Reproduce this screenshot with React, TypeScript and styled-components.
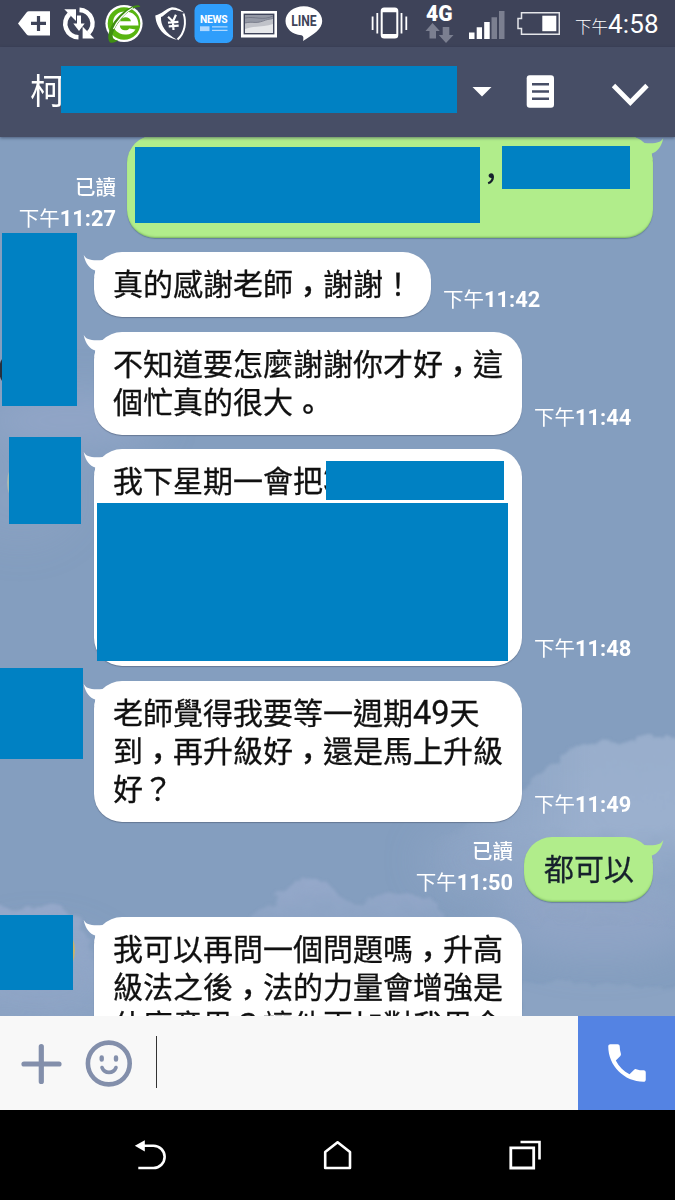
import React from "react";
import styled, { createGlobalStyle, css } from "styled-components";

const MASK = "#0081c3";
const CJK = `"Noto Sans CJK TC", sans-serif`;

const GlobalStyle = createGlobalStyle`
  body { margin: 0; background: #000; }
  * { box-sizing: border-box; }
`;

const Phone = styled.div`
  width: 675px;
  height: 1200px;
  display: flex;
  flex-direction: column;
  overflow: hidden;
  font-family: Roboto, ${CJK};
`;

const StatusBar = styled.div`
  height: 47px;
  flex: none;
  display: flex;
  background: #3e4359;
  color: #fff;
`;

const Glyph = styled.svg<{ $gap?: number }>`
  display: block;
  flex: none;
  margin-left: ${(p) => p.$gap ?? 0}px;
`;

const Clock = styled.div`
  margin-left: 15px;
  display: flex;
  align-items: baseline;
  font-size: 26px;
  line-height: 48px;
  letter-spacing: 0.2px;
  white-space: nowrap;
`;

const ClockPeriod = styled.span`
  font-family: ${CJK};
  font-weight: 300;
  font-size: 16.5px;
  letter-spacing: 0;
`;

const Header = styled.header`
  position: relative;
  z-index: 2;
  height: 90px;
  flex: none;
  display: flex;
  padding-left: 30px;
  background: #474e66;
  box-shadow: 0 1px 3px rgba(30, 40, 70, 0.55);
`;

const Title = styled.div`
  width: 31px;
  font: 400 35px/84px ${CJK};
  color: #fff;
  white-space: nowrap;
`;

const TitleMask = styled.div`
  position: relative;
  width: 396px;
  height: 47px;
  margin-top: 19px;
  background: ${MASK};
`;

const Chat = styled.main`
  position: relative;
  height: 879px;
  flex: none;
  overflow: hidden;
  background: #849ebf;
`;

const Sky = styled.svg`
  position: absolute;
  inset: 0;
`;

const Messages = styled.div`
  position: relative;
  display: flex;
  flex-direction: column;
  margin-top: -2px;
`;

const Row = styled.div<{ $mine?: boolean; $top?: number }>`
  position: relative;
  display: flex;
  align-items: flex-end;
  flex: none;
  margin-top: ${(p) => p.$top ?? 15}px;
  ${(p) =>
    p.$mine
      ? css`
          justify-content: flex-end;
          padding-right: 22px;
          gap: 11px;
        `
      : css`
          padding-left: 94px;
          gap: 12px;
        `}
`;

const Bubble = styled.div<{ $mine?: boolean; $w: number; $h?: number }>`
  position: relative;
  flex: none;
  width: ${(p) => p.$w}px;
  height: ${(p) => (p.$h ? `${p.$h}px` : "auto")};
  padding: 13px 18px 14px ${(p) => (p.$mine ? 20 : 19)}px;
  border-radius: 28px;
  background: ${(p) => (p.$mine ? "#b1ed8b" : "#fff")};
  color: ${(p) => (p.$mine ? "#16202c" : "#111")};
  box-shadow: ${(p) =>
    p.$mine
      ? "inset 0 -2px 2px -1px rgba(80,140,60,.55), 0 1px 1px rgba(60,90,110,.45)"
      : "0 1px 1px rgba(80,95,120,.6)"};
`;

const LineBox = styled.div`
  height: 38px;
  font: 400 30px/34px ${CJK};
  -webkit-text-stroke: 0.3px currentColor;
  white-space: nowrap;
`;

const LowMark = styled.span`
  font-weight: 500;
  line-height: 0;
  vertical-align: -7px;
`;

const Digits = styled.span`
  font-family: Roboto, sans-serif;
  font-size: 32.5px;
  line-height: 1;
`;

const Tail = styled.svg<{ $mine?: boolean }>`
  position: absolute;
  top: 0;
  ${(p) => (p.$mine ? "right: -12px; transform: scaleX(-1);" : "left: -12px;")}
`;

const Meta = styled.div<{ $raised?: boolean }>`
  margin-top: -4px;
  padding-bottom: ${(p) => (p.$raised ? 5 : 3)}px;
  display: flex;
  flex-direction: column;
  align-items: flex-end;
  color: #fff;
`;

const MetaLine = styled.div`
  height: 31px;
  line-height: 31px;
  display: flex;
  align-items: baseline;
  font-size: 21.8px;
  font-weight: 700;
  white-space: nowrap;
`;

const MetaCjk = styled.span<{ $strong?: boolean }>`
  font-family: ${CJK};
  font-weight: ${(p) => (p.$strong ? 500 : 400)};
  font-size: 20.5px;
`;

const Avatar = styled.div<{ $x: number; $y: number; $d: number; $c: string }>`
  position: absolute;
  left: ${(p) => p.$x}px;
  top: ${(p) => p.$y}px;
  width: ${(p) => p.$d}px;
  height: ${(p) => p.$d}px;
  border-radius: 50%;
  background: ${(p) => p.$c};
`;

const Mask = styled.div<{ $x: number; $y: number; $w: number; $h: number }>`
  position: absolute;
  z-index: 1;
  left: ${(p) => p.$x}px;
  top: ${(p) => p.$y}px;
  width: ${(p) => p.$w}px;
  height: ${(p) => p.$h}px;
  background: ${MASK};
`;

const MaskedLine = styled.div`
  display: flex;
  align-items: flex-start;
  margin: -13px 0 0 -12px;
`;

const InlineMask = styled.div<{ $w: number; $h: number; $top: number }>`
  flex: none;
  width: ${(p) => p.$w}px;
  height: ${(p) => p.$h}px;
  margin-top: ${(p) => p.$top}px;
  background: ${MASK};
`;

const Comma = styled.span`
  width: 22px;
  margin-top: 23px;
  display: flex;
  justify-content: center;
  font: 500 30px/36px ${CJK};
`;

const Composer = styled.div`
  height: 94px;
  flex: none;
  display: flex;
  background: #f8f8f8;
`;

const Caret = styled.div`
  width: 1px;
  height: 52px;
  margin: 20px 0 0 22px;
  background: #333;
`;

const CallButton = styled.div`
  width: 97px;
  margin-left: auto;
  display: flex;
  align-items: center;
  justify-content: center;
  background: #5483e3;
`;

const NavBar = styled.nav`
  height: 90px;
  flex: none;
  display: flex;
  background: #000;
`;

/* Every icon keeps bar-wide x coordinates, windowed to its own slot. */
const Icon = ({ x, w, y = 0, h = 47, gap, children }: {
  x: number; w: number; y?: number; h?: number; gap?: number; children: React.ReactNode;
}) => (
  <Glyph width={w} height={h} viewBox={`${x} ${y} ${w} ${h}`} $gap={gap} fill="none">
    {children}
  </Glyph>
);

const BubbleTail = ({ mine }: { mine?: boolean }) => (
  <Tail $mine={mine} width="24" height="30" viewBox="0 0 24 30">
    <path d="M1.700 3C4.500 8 9 8.600 21 8V25H12.500L13.200 18.500C8 17 3.500 12 1.700 3Z" fill={mine ? "#b1ed8b" : "#fff"} />
  </Tail>
);

/* Commas and full stops sit close to the baseline of the line. */
const Line = ({ text, children }: { text: string; children?: React.ReactNode }) => (
  <LineBox>
    {text.split(/([，。])/).map((part, i) =>
      part === "，" || part === "。" ? <LowMark key={i}>{part}</LowMark> : part
    )}
    {children}
  </LineBox>
);

const Time = ({ at, read }: { at: string; read?: boolean }) => (
  <Meta $raised={read}>
    {read && <MetaLine><MetaCjk $strong>已讀</MetaCjk></MetaLine>}
    <MetaLine><MetaCjk>下午</MetaCjk>{at}</MetaLine>
  </Meta>
);

const StatusIcons = () => (
  <>
    <Icon x={17} w={34} gap={17}>
      <path d="M18 23.5 26.5 12.6Q27.5 11.3 29 11.3H50V35.5H29Q27.5 35.5 26.5 34.3Z" fill="#fff" />
      <path d="M31 23.4H46M38.5 16V31" stroke="#3e4359" strokeWidth="3.2" />
    </Icon>
    <Icon x={61} w={36} gap={10}>
      <path d="M78.500 37.300A13.500 13.500 0 0 1 69.500 14" stroke="#fff" strokeWidth="4.600" />
      <path d="M64.300 9.300H76V21Z" fill="#fff" />
      <path d="M79.500 9.900A13.500 13.500 0 0 1 88.500 33" stroke="#fff" strokeWidth="4.600" />
      <path d="M82.600 26.500V38.500H94.300Z" fill="#fff" />
      <path d="M79 15.500V25" stroke="#fff" strokeWidth="4" />
      <path d="M73.300 23.500H84.700L79 31Z" fill="#fff" />
    </Icon>
    <Icon x={104} w={40} gap={7}>
      <circle cx="124" cy="23.500" r="18.600" fill="#fff" />
      <circle cx="124" cy="23.500" r="16.300" fill="#58b510" />
      <path d="M135.500 30.500C133 34.500 129 36 125 35.500C117.500 35 113 30.500 113 24C113 17 118 12.500 125 12.500C133 12.500 138.500 17.500 138.500 26.500H119.800C120 29.500 122 31.300 125 31.300C127 31.300 128.500 30.800 129.300 29.500Z" fill="#fff" transform="translate(0 -1)" />
      <path d="M120 21.300H131C130 16 121.500 16 120 21.300Z" fill="#58b510" />
      <path d="M140.300 7C139 2.500 127 7 117 18C108 28 106.500 39 110 42.500C113 43.500 116 42 118.500 40C113.500 41 110.500 37 114.500 29.500C119 20 131 6 140.300 7Z" fill="#3f8e12" />
      <path d="M133 7.800C125 12 117 21 113.500 29" stroke="#fff" strokeWidth="1.200" />
    </Icon>
    <Icon x={154} w={33} gap={10}>
      <path d="M155.300 15.500C162 14 165 9 172 7.200C178 7.500 181 10 184 12.500C180 11 176 9.500 172 9.700C167 11.500 165 15.500 161 17C160.500 25 165 33 177 39.800C161 36 156 25 155.300 15.500Z" fill="#fff" />
      <path d="M183.500 13.500C186.500 22 185 33 177.500 39.500" stroke="#fff" strokeWidth="2" />
      <path d="M168.500 16.500 173 21.500 176.500 15M173 21.500V30M168 22.300H178.500M168.500 26H178.500" stroke="#fff" strokeWidth="2.200" transform="rotate(-4 173 23)" />
    </Icon>
    <Icon x={194} w={39} gap={7}>
      <rect x="194.500" y="4" width="38.500" height="39" rx="6.500" fill="#2f9efb" />
      <text x="213.800" y="23.400" textAnchor="middle" fontFamily="Roboto, sans-serif" fontWeight="700" fontSize="10.300" textLength="27.500" fill="#fff">NEWS</text>
      <rect x="200" y="26.300" width="9.500" height="4.800" fill="#aed8ff" />
      <path d="M212 26.800H227.500M212 30.300H227.500" stroke="#aed8ff" strokeWidth="1.200" />
    </Icon>
    <Icon x={240} w={38} gap={7}>
      <rect x="242" y="12" width="34" height="24.500" fill="#fff" stroke="#fff" strokeWidth="2" />
      <rect x="244.300" y="14.300" width="29.400" height="19.400" fill="#9498a5" stroke="#3e4359" strokeWidth="1.400" />
      <path d="M245 23C252 21 255 24 262 21S270 20 273 18V33H245Z" fill="#c0c2c9" />
      <path d="M245 29C254 26 265 27 273 24V33H245Z" fill="#e6e7ea" />
      <path d="M245 18C255 16 263 21 273 16M245 23C253 21 255 24 263 21S270 20 273 18" stroke="#6c7080" strokeWidth=".8" />
    </Icon>
    <Icon x={285} w={38} gap={7}>
      <path d="M303.800 6.300C314 6.300 322.200 12.700 322.200 21C322.200 29 314 34 303 41C303.700 38 303.700 36 301.500 35.200C292 34.500 285.500 28.500 285.500 21C285.500 12.700 293.500 6.300 303.800 6.300Z" fill="#fff" />
      <text x="303.900" y="25.800" textAnchor="middle" fontFamily="Roboto, sans-serif" fontWeight="700" fontSize="14" textLength="25.500" lengthAdjust="spacingAndGlyphs" fill="#3e4359">LINE</text>
    </Icon>
    <Icon x={370} w={39} gap={47}>
      <rect x="381.700" y="8.600" width="15.600" height="29" rx="2.500" stroke="#fff" strokeWidth="2" />
      <path d="M382 10.500H397M382 35.800H397" stroke="#fff" strokeWidth="3.400" />
      <path d="M377.300 13V33.500M372.600 16.500V30M401.500 13V33.500M406.300 16.500V30" stroke="#fff" strokeWidth="1.800" />
    </Icon>
    <Icon x={424} w={30} gap={15}>
      <text x="426" y="20.800" fontFamily="Roboto, sans-serif" fontWeight="900" fontSize="22.300" textLength="26.500" lengthAdjust="spacingAndGlyphs" fill="#fff">4G</text>
      <path d="M432.500 23 439.800 31H436V38.500H429.500V31H425.500Z" fill="#7b7f90" />
      <path d="M446 43 438.800 35H442.700V27H449.300V35H453.500Z" fill="#7b7f90" />
    </Icon>
    <Icon x={468} w={37} gap={14}>
      <path d="M469 32.500H474.500V39H469ZM476.700 27.300H482V39H476.700ZM484.200 22H489.700V39H484.200Z" fill="#fff" />
      <path d="M491.500 17.300H497V39H491.500ZM499 11H504.500V39H499Z" fill="#7b7f90" />
    </Icon>
    <Icon x={516} w={44} gap={11}>
      <path d="M521.500 12.700H559.300V34.300H521.500V28.500H518V18.500H521.500Z" stroke="#e4e5e9" strokeWidth="1.500" />
      <rect x="542.300" y="15.700" width="14" height="15.500" fill="#fff" />
    </Icon>
  </>
);

const Clouds = () => (
  <Sky width="675" height="879" viewBox="0 137 675 879">
    <defs>
      <filter id="cloud" x="-20%" y="-20%" width="140%" height="140%">
        <feTurbulence type="fractalNoise" baseFrequency=".045" numOctaves="4" seed="4" />
        <feDisplacementMap in="SourceGraphic" scale="22" xChannelSelector="R" yChannelSelector="G" />
        <feGaussianBlur stdDeviation="1.6" />
      </filter>
      <filter id="haze" x="-40%" y="-40%" width="180%" height="180%">
        <feGaussianBlur stdDeviation="18" />
      </filter>
      <linearGradient id="fade" x1="0" y1="0" x2="0" y2="1">
        <stop offset="0" stopColor="#9cb0ce" stopOpacity=".85" />
        <stop offset=".4" stopColor="#9fb3d0" stopOpacity=".85" />
        <stop offset=".85" stopColor="#94a9c9" stopOpacity="0" />
      </linearGradient>
      <linearGradient id="wisp" x1="0" y1="0" x2="0" y2="1">
        <stop offset="0" stopColor="#9bacce" stopOpacity=".75" />
        <stop offset="1" stopColor="#94a9c9" stopOpacity=".1" />
      </linearGradient>
      <linearGradient id="edge" x1="430" y1="0" x2="590" y2="0" gradientUnits="userSpaceOnUse">
        <stop offset="0" stopColor="#000" />
        <stop offset="1" stopColor="#fff" />
      </linearGradient>
      <mask id="soften" maskUnits="userSpaceOnUse" x="400" y="700" width="300" height="300">
        <rect x="400" y="700" width="300" height="300" fill="url(#edge)" />
      </mask>
    </defs>
    <g filter="url(#haze)" fill="#9bacce">
      <ellipse cx="70" cy="420" rx="90" ry="30" opacity=".55" />
      <ellipse cx="20" cy="500" rx="60" ry="45" opacity=".2" />
      <ellipse cx="40" cy="980" rx="80" ry="50" opacity=".35" />
      <ellipse cx="500" cy="860" rx="80" ry="40" opacity=".35" />
      <ellipse cx="600" cy="920" rx="100" ry="40" opacity=".5" />
    </g>
    <g mask="url(#soften)">
      <g filter="url(#cloud)">
        <path d="M430 850C455 820 515 810 528 785C540 765 560 755 575 750C590 757 610 737 640 735C660 734 680 742 710 742V960H430Z" fill="url(#fade)" />
      </g>
    </g>
    <g filter="url(#cloud)">
      <path d="M250 922C262 905 290 880 315 880C335 885 345 905 365 905C385 890 420 890 440 905L450 960H240Z" fill="url(#wisp)" />
      <path d="M-20 910C5 900 20 915 40 907C55 895 60 915 80 920L110 1030H-20Z" fill="url(#wisp)" />
      <path d="M520 985C570 970 620 1000 700 985V1040H520Z" fill="#9dafce" opacity=".3" />
    </g>
  </Sky>
);

export default function App() {
  return (
    <>
      <GlobalStyle />
      <Phone>
        <StatusBar>
          <StatusIcons />
          <Clock><ClockPeriod>下午</ClockPeriod>4:58</Clock>
        </StatusBar>

        <Header>
          <Title>柯</Title>
          <TitleMask />
          <Icon x={472} w={20} h={90} y={47} gap={15}>
            <path d="M472.500 87H491.500L482 96.500Z" fill="#fff" />
          </Icon>
          <Icon x={526} w={29} h={90} y={47} gap={34}>
            <rect x="526.700" y="75.300" width="27.300" height="32.500" rx="3" fill="#fff" />
            <path d="M532 84.300H549M532 91.500H549M532 98.700H549" stroke="#474e66" strokeWidth="2.600" />
          </Icon>
          <Icon x={610} w={40} h={90} y={47} gap={55}>
            <path d="M613.500 85.500 630.300 102.500 647 85.500" stroke="#fff" strokeWidth="4.800" />
          </Icon>
        </Header>

        <Chat>
          <Clouds />
          <Messages>
            <Row $mine $top={0}>
              <Time at="11:27" read />
              <Bubble $mine $w={526} $h={103}>
                <MaskedLine>
                  <InlineMask $w={345} $h={76} $top={12} />
                  <Comma>，</Comma>
                  <InlineMask $w={128} $h={43} $top={11} />
                </MaskedLine>
                <BubbleTail mine />
              </Bubble>
            </Row>

            <Row $top={14}>
              <Mask $x={2} $y={-19} $w={75} $h={173} />
              <Bubble $w={337}>
                <BubbleTail />
                <Line text="真的感謝老師，謝謝！" />
              </Bubble>
              <Time at="11:42" />
            </Row>

            <Row>
              <Avatar $x={-1} $y={16} $d={44} $c="#26303e" />
              <Mask $x={2} $y={-19} $w={75} $h={93} />
              <Bubble $w={428}>
                <BubbleTail />
                <Line text="不知道要怎麼謝謝你才好，這" />
                <Line text="個忙真的很大。" />
              </Bubble>
              <Time at="11:44" />
            </Row>

            <Row $top={14}>
              <Avatar $x={7} $y={0} $d={67} $c="#a9b9b4" />
              <Mask $x={9} $y={-12} $w={72} $h={87} />
              <Bubble $w={428} $h={217}>
                <BubbleTail />
                <Line text="我下星期一會把"><Digits>3</Digits></Line>
                <Mask $x={232} $y={12} $w={178} $h={39} />
                <Mask $x={3} $y={54} $w={411} $h={158} />
              </Bubble>
              <Time at="11:48" />
            </Row>

            <Row>
              <Mask $x={0} $y={-13} $w={83} $h={91} />
              <Bubble $w={428}>
                <BubbleTail />
                <Line text="老師覺得我要等一週期"><Digits>49</Digits>天</Line>
                <Line text="到，再升級好，還是馬上升級" />
                <Line text="好？" />
              </Bubble>
              <Time at="11:49" />
            </Row>

            <Row $mine>
              <Time at="11:50" read />
              <Bubble $mine $w={129}>
                <BubbleTail mine />
                <Line text="都可以" />
              </Bubble>
            </Row>

            <Row>
              <Avatar $x={8} $y={0} $d={67} $c="#c9b36b" />
              <Mask $x={0} $y={-2} $w={73} $h={75} />
              <Bubble $w={428}>
                <BubbleTail />
                <Line text="我可以再問一個問題嗎，升高" />
                <Line text="級法之後，法的力量會增強是" />
                <Line text="什麼意思？讓他更加對我思念" />
              </Bubble>
            </Row>
          </Messages>
        </Chat>

        <Composer>
          <Icon x={20} w={43} y={1016} h={94} gap={20}>
            <path d="M24 1064H59M41.300 1046.500V1081.500" stroke="#838fab" strokeWidth="5.200" strokeLinecap="round" />
          </Icon>
          <Icon x={84} w={50} y={1016} h={94} gap={21}>
            <circle cx="108.800" cy="1063.500" r="20.900" stroke="#838fab" strokeWidth="4.600" />
            <path d="M101.700 1057.500V1059.500M116 1057.500V1059.500" stroke="#838fab" strokeWidth="4.400" strokeLinecap="round" />
            <path d="M102 1067.500C104.500 1074 113.500 1074 116 1067.500" stroke="#838fab" strokeWidth="3.600" strokeLinecap="round" />
          </Icon>
          <Caret />
          <CallButton>
            <svg width="50" height="50" viewBox="0 0 24 24" fill="#fff">
              <path d="M6.620 10.790c1.440 2.830 3.760 5.140 6.590 6.590l2.200-2.200c.27-.27.67-.36 1.020-.24 1.120.37 2.330.57 3.570.57.550 0 1 .45 1 1V20c0 .55-.45 1-1 1-9.390 0-17-7.610-17-17 0-.55.45-1 1-1h3.500c.55 0 1 .45 1 1 0 1.250.2 2.450.57 3.570.11.35.03.74-.25 1.020l-2.200 2.200z" />
            </svg>
          </CallButton>
        </Composer>

        <NavBar>
          <Icon x={134} w={33} y={1110} h={90} gap={134}>
            <path d="M143 1145.700H153.500A11 11 0 0 1 153.500 1168H138.300" stroke="#fff" strokeWidth="2.600" />
            <path d="M134.800 1145.800 144.800 1140.300V1151.500Z" fill="#fff" />
          </Icon>
          <Icon x={322} w={31} y={1110} h={90} gap={155}>
            <path d="M325.200 1168V1152L337.600 1142.300 350 1152V1168Z" stroke="#fff" strokeWidth="2.600" strokeLinejoin="round" />
          </Icon>
          <Icon x={508} w={34} y={1110} h={90} gap={155}>
            <path d="M510.800 1147.800H533.700V1168H510.800Z" stroke="#fff" strokeWidth="2.800" />
            <path d="M520.500 1142H539.500V1159.500" stroke="#fff" strokeWidth="2.600" />
          </Icon>
        </NavBar>
      </Phone>
    </>
  );
}
